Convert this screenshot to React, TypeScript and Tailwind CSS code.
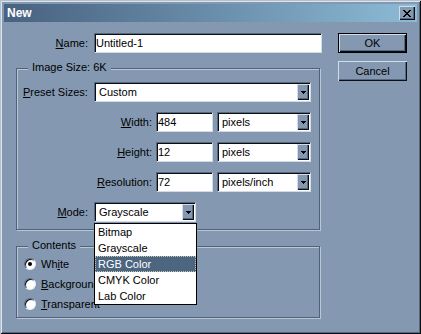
import React from "react";

const RAISED =
  "bg-[#8499b1] shadow-[inset_1px_1px_0_#d2dce6,inset_-1px_-1px_0_#0b0f14,inset_-2px_-2px_0_#56697f]";
const SUNKEN =
  "bg-white border border-t-[#56697f] border-l-[#56697f] border-b-[#d3dce6] border-r-[#d3dce6] shadow-[inset_1px_1px_0_#0b0f14]";
const GROUP =
  "relative border border-[#4f6278] shadow-[inset_1px_1px_0_#bac8d6,1px_1px_0_#bac8d6]";

function U({ children }: { children: React.ReactNode }) {
  return <span className="underline underline-offset-[1px]">{children}</span>;
}

function Arrow() {
  return (
    <div className={`${RAISED} w-[12px] h-[16px] mr-[1px] shrink-0 flex items-center justify-center`}>
      <svg width="5" height="3" viewBox="0 0 5 3" shapeRendering="crispEdges">
        <rect x="0" y="0" width="5" height="1" fill="#000" />
        <rect x="1" y="1" width="3" height="1" fill="#000" />
        <rect x="2" y="2" width="1" height="1" fill="#000" />
      </svg>
    </div>
  );
}

function Select({ className, text }: { className: string; text: string }) {
  return (
    <div className={`${SUNKEN} ${className} h-[20px] flex items-center shrink-0`}>
      <span className="flex-1 pl-[4px] whitespace-nowrap">{text}</span>
      <Arrow />
    </div>
  );
}

function Input({ className, text }: { className: string; text: string }) {
  return (
    <div className={`${SUNKEN} ${className} h-[20px] flex items-center pl-[1px] shrink-0`}>
      <span className="whitespace-nowrap">{text}</span>
    </div>
  );
}

function Radio({ checked, children }: { checked?: boolean; children: React.ReactNode }) {
  return (
    <div className="h-[20px] flex items-center pl-[7px] gap-[5px]">
      <div className="w-[12px] h-[12px] rounded-full bg-white border border-t-[#56697f] border-l-[#56697f] border-r-[#e6ecf2] border-b-[#e6ecf2] shadow-[inset_1px_1px_0_#0b0f14] flex items-center justify-center shrink-0">
        {checked && <div className="w-[4px] h-[4px] rounded-full bg-black" />}
      </div>
      <span className="whitespace-nowrap">{children}</span>
    </div>
  );
}

export default function App() {
  const items = ["Bitmap", "Grayscale", "RGB Color", "CMYK Color", "Lab Color"];
  return (
    <div className="w-[421px] h-[334px] bg-[#8499b1] p-[4px] flex flex-col text-[11px] leading-[13px] text-black font-['Liberation_Sans',Arial,sans-serif] shadow-[inset_1px_1px_0_#b3c1cf,inset_-1px_-1px_0_#0b0f14,inset_2px_2px_0_#dbe3eb,inset_-2px_-2px_0_#55687e]">
      {/* Title bar */}
      <div className="h-[18px] shrink-0 flex items-center justify-between bg-linear-to-r from-[#48627f] to-[#8cbbd6] pl-[3px] pr-[2px]">
        <span className="font-bold text-white text-[12px]">New</span>
        <div className={`${RAISED} w-[16px] h-[14px] flex items-center justify-center`}>
          <svg width="8" height="7" viewBox="0 0 8 7" shapeRendering="crispEdges">
            <path d="M0 0h2v1h1v1h2V1h1V0h2v1H7v1H6v1H5v1h1v1h1v1h1v1H6V6H5V5H3v1H2v1H0V6h1V5h1V4h1V3H2V2H1V1H0z" fill="#000" />
          </svg>
        </div>
      </div>

      {/* Body */}
      <div className="flex flex-1">
        {/* Left column */}
        <div className="w-[334px] shrink-0 flex flex-col">
          <div className="mt-[11px] h-[20px] flex items-center">
            <span className="w-[84px] text-right">
              <U>N</U>ame:
            </span>
            <Input className="ml-[6px] w-[228px]" text="Untitled-1" />
          </div>

          {/* Image Size group */}
          <div className={`${GROUP} ml-[12px] mt-[15px] w-[304px] h-[162px] flex flex-col`}>
            <span className="absolute -top-[8px] left-[11px] bg-[#8499b1] px-[4px] whitespace-nowrap">
              Image Size: 6K
            </span>
            <div className="mt-[13px] h-[20px] flex items-center">
              <span className="w-[77px] pl-[6px] whitespace-nowrap">
                <U>P</U>reset Sizes:
              </span>
              <Select className="w-[217px]" text="Custom" />
            </div>
            <div className="mt-[10px] h-[20px] flex items-center">
              <span className="w-[135px] text-right">
                <U>W</U>idth:
              </span>
              <Input className="ml-[4px] w-[57px]" text="484" />
              <Select className="ml-[4px] w-[94px]" text="pixels" />
            </div>
            <div className="mt-[10px] h-[20px] flex items-center">
              <span className="w-[135px] text-right">
                <U>H</U>eight:
              </span>
              <Input className="ml-[4px] w-[57px]" text="12" />
              <Select className="ml-[4px] w-[94px]" text="pixels" />
            </div>
            <div className="mt-[10px] h-[20px] flex items-center">
              <span className="w-[135px] text-right">
                <U>R</U>esolution:
              </span>
              <Input className="ml-[4px] w-[57px]" text="72" />
              <Select className="ml-[4px] w-[94px]" text="pixels/inch" />
            </div>
            <div className="mt-[10px] h-[20px] flex items-center">
              <span className="w-[71px] text-right">
                <U>M</U>ode:
              </span>
              <div className="relative ml-[6px] z-10">
                <Select className="w-[102px]" text="Grayscale" />
                <div className="absolute top-[21px] left-0 w-[103px] bg-white border border-black flex flex-col">
                  {items.map((it) =>
                    it === "RGB Color" ? (
                      <div
                        key={it}
                        className="h-[16px] flex items-center pl-[3px] bg-[#4c6580] text-white outline-1 outline-dotted outline-[#c9c6a4] -outline-offset-1"
                      >
                        {it}
                      </div>
                    ) : (
                      <div key={it} className="h-[16px] flex items-center pl-[3px]">
                        {it}
                      </div>
                    )
                  )}
                </div>
              </div>
            </div>
          </div>

          {/* Contents group */}
          <div className={`${GROUP} ml-[12px] mt-[16px] w-[304px] h-[72px] flex flex-col pt-[7px]`}>
            <span className="absolute -top-[8px] left-[11px] bg-[#8499b1] px-[4px] whitespace-nowrap">
              Contents
            </span>
            <Radio checked>
              Wh<U>i</U>te
            </Radio>
            <Radio>
              <U>B</U>ackground Color
            </Radio>
            <Radio>
              <U>T</U>ransparent
            </Radio>
          </div>
        </div>

        {/* Right column */}
        <div className="mt-[11px] flex flex-col gap-[8px]">
          <div className="w-[69px] h-[20px] border border-black">
            <div className={`${RAISED} w-full h-full flex items-center justify-center`}>OK</div>
          </div>
          <div className={`${RAISED} w-[69px] h-[20px] flex items-center justify-center`}>Cancel</div>
        </div>
      </div>
    </div>
  );
}
